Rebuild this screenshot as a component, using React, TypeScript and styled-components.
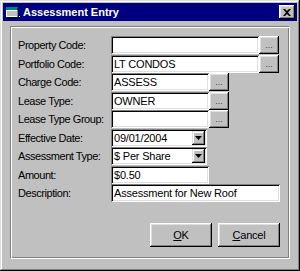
import React from "react";
import styled, { createGlobalStyle } from "styled-components";

const GlobalStyle = createGlobalStyle`
  html, body {
    margin: 0;
    padding: 0;
    background: #c0c0c0;
  }
  body {
    font-family: "Liberation Sans", Arial, sans-serif;
    font-size: 11px;
    color: #000;
  }
`;

const Window = styled.div`
  width: 300px;
  height: 271px;
  box-sizing: border-box;
  padding: 3px;
  background: #c0c0c0;
  box-shadow: inset -1px -1px #000, inset 1px 1px #dfdfdf,
    inset -2px -2px #808080, inset 2px 2px #fff;
  display: flex;
  flex-direction: column;
`;

const TitleBar = styled.div`
  height: 18px;
  background: #000080;
  display: flex;
  align-items: center;
  padding: 0 2px 0 2px;
  color: #fff;
`;

const TitleText = styled.span`
  flex: 1;
  margin-left: 2px;
  font-weight: bold;
  font-size: 11px;
  letter-spacing: 0;
`;

const CloseButton = styled.div`
  width: 16px;
  height: 14px;
  box-sizing: border-box;
  background: #c0c0c0;
  box-shadow: inset -1px -1px #000, inset 1px 1px #fff,
    inset -2px -2px #808080, inset 2px 2px #dfdfdf;
  display: flex;
  align-items: center;
  justify-content: center;
`;

const GroupBox = styled.div`
  margin: 5px 7px 0 7px;
  height: 233px;
  box-sizing: border-box;
  border: 1px solid #808080;
  border-right-color: #fff;
  border-bottom-color: #fff;
  box-shadow: inset 1px 1px #fff, inset -1px -1px #808080;
  padding: 9px 8px 0 7px;
`;

const Form = styled.div`
  display: grid;
  grid-template-columns: 93px 1fr;
  grid-auto-rows: 18.5px;
  align-items: start;
`;

const Label = styled.label`
  height: 18px;
  display: flex;
  align-items: center;
  letter-spacing: -0.45px;
  white-space: nowrap;
`;

const FieldRow = styled.div`
  display: flex;
  align-items: stretch;
  height: 18px;
`;

const TextBox = styled.div<{ $w: number }>`
  width: ${(p) => p.$w}px;
  height: 18px;
  box-sizing: border-box;
  background: #fff;
  box-shadow: inset 1px 1px #808080, inset -1px -1px #fff,
    inset 2px 2px #000, inset -2px -2px #dfdfdf;
  padding: 0 3px;
  display: flex;
  align-items: center;
  white-space: nowrap;
  overflow: hidden;
  letter-spacing: -0.2px;
`;

const Combo = styled.div<{ $w: number }>`
  width: ${(p) => p.$w}px;
  height: 18px;
  box-sizing: border-box;
  background: #fff;
  box-shadow: inset 1px 1px #808080, inset -1px -1px #fff,
    inset 2px 2px #000, inset -2px -2px #dfdfdf;
  padding: 2px;
  display: flex;
`;

const ComboText = styled.div`
  flex: 1;
  padding-left: 1px;
  display: flex;
  align-items: center;
  white-space: nowrap;
  letter-spacing: -0.2px;
`;

const ComboArrow = styled.div`
  width: 13px;
  box-sizing: border-box;
  background: #c0c0c0;
  box-shadow: inset -1px -1px #000, inset 1px 1px #dfdfdf,
    inset -2px -2px #808080, inset 2px 2px #fff;
  display: flex;
  align-items: center;
  justify-content: center;
`;

const DotsButton = styled.div`
  width: 20px;
  box-sizing: border-box;
  background: #c0c0c0;
  box-shadow: inset -1px -1px #000, inset 1px 1px #fff,
    inset -2px -2px #808080, inset 2px 2px #dfdfdf;
  display: flex;
  align-items: flex-end;
  justify-content: center;
  padding-bottom: 4px;
  font-size: 9px;
  line-height: 9px;
  color: #404040;
`;

const ButtonBar = styled.div`
  display: flex;
  justify-content: flex-end;
  gap: 6px;
  margin-top: 20px;
  padding-right: 1px;
`;

const PushButton = styled.div`
  width: 62px;
  height: 24px;
  box-sizing: border-box;
  background: #c0c0c0;
  box-shadow: inset -1px -1px #000, inset 1px 1px #fff,
    inset -2px -2px #808080, inset 2px 2px #dfdfdf;
  display: flex;
  align-items: center;
  justify-content: center;
  letter-spacing: -0.2px;
  u {
    text-decoration: underline;
  }
`;

const AppIcon = () => (
  <svg width="16" height="14" viewBox="0 0 16 14">
    <rect x="1" y="2" width="12" height="10" fill="#fff" />
    <rect x="1" y="2" width="12" height="3" fill="#008080" />
    <rect x="2" y="6" width="10" height="5" fill="#c0c0c0" />
    <path d="M13 3v10H2" stroke="#000" strokeWidth="1" fill="none" />
    <rect x="14" y="11" width="1" height="1" fill="#fff" />
  </svg>
);

const CloseIcon = () => (
  <svg width="8" height="7" viewBox="0 0 8 7">
    <path d="M0 0h2l2 2 2-2h2L5 3.5 8 7H6L4 5 2 7H0l3-3.5z" fill="#000" />
  </svg>
);

const ArrowIcon = () => (
  <svg width="7" height="4" viewBox="0 0 7 4">
    <path d="M0 0h7L3.5 4z" fill="#000" />
  </svg>
);

type Row =
  | { label: string; kind: "text"; value: string; w: number; dots?: boolean }
  | { label: string; kind: "combo"; value: string; w: number };

const rows: Row[] = [
  { label: "Property Code:", kind: "text", value: "", w: 148, dots: true },
  { label: "Portfolio Code:", kind: "text", value: "LT CONDOS", w: 148, dots: true },
  { label: "Charge Code:", kind: "text", value: "ASSESS", w: 98, dots: true },
  { label: "Lease Type:", kind: "text", value: "OWNER", w: 98, dots: true },
  { label: "Lease Type Group:", kind: "text", value: "", w: 98, dots: true },
  { label: "Effective Date:", kind: "combo", value: "09/01/2004", w: 96 },
  { label: "Assessment Type:", kind: "combo", value: "$ Per Share", w: 96 },
  { label: "Amount:", kind: "text", value: "$0.50", w: 98 },
  { label: "Description:", kind: "text", value: "Assessment for New Roof", w: 169 },
];

export default function App() {
  return (
    <>
      <GlobalStyle />
      <Window>
        <TitleBar>
          <AppIcon />
          <TitleText>Assessment Entry</TitleText>
          <CloseButton>
            <CloseIcon />
          </CloseButton>
        </TitleBar>
        <GroupBox>
          <Form>
            {rows.map((r) => (
              <React.Fragment key={r.label}>
                <Label>{r.label}</Label>
                <FieldRow>
                  {r.kind === "combo" ? (
                    <Combo $w={r.w}>
                      <ComboText>{r.value}</ComboText>
                      <ComboArrow>
                        <ArrowIcon />
                      </ComboArrow>
                    </Combo>
                  ) : (
                    <>
                      <TextBox $w={r.w}>{r.value}</TextBox>
                      {r.dots && <DotsButton>...</DotsButton>}
                    </>
                  )}
                </FieldRow>
              </React.Fragment>
            ))}
          </Form>
          <ButtonBar>
            <PushButton>
              <u>O</u>K
            </PushButton>
            <PushButton>
              <u>C</u>ancel
            </PushButton>
          </ButtonBar>
        </GroupBox>
      </Window>
    </>
  );
}
